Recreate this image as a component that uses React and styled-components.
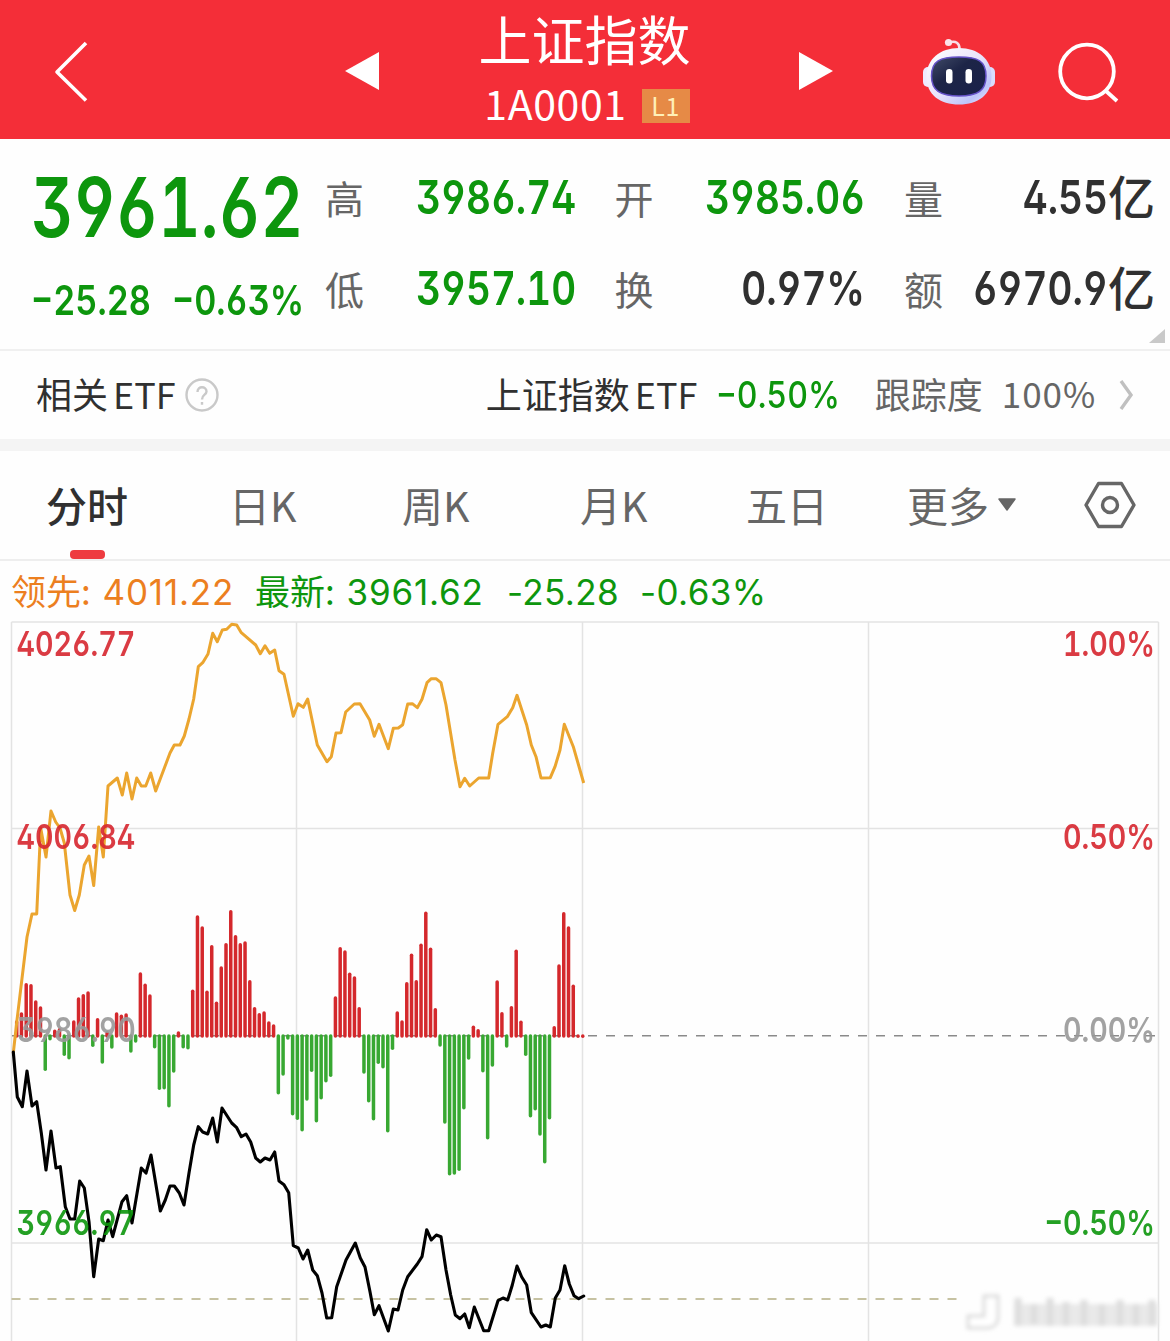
import styled, { createGlobalStyle } from "styled-components";

const GREEN = "#0d960d";
const RED = "#d7262f";
const DARK = "#303030";
const GRAY = "#666";

const quotes = [
  { label: "高", value: "3986.74", color: GREEN },
  { label: "开", value: "3985.06", color: GREEN },
  { label: "量", value: "4.55", unit: "亿", color: DARK },
  { label: "低", value: "3957.10", color: GREEN },
  { label: "换", value: "0.97%", color: DARK },
  { label: "额", value: "6970.9", unit: "亿", color: DARK },
];

const tabs = [
  { name: "分时", left: 46, active: true },
  { name: "日K", left: 229 },
  { name: "周K", left: 402 },
  { name: "月K", left: 580 },
  { name: "五日", left: 746 },
  { name: "更多", left: 907, caret: true },
];

const leadLine =
  "13.3,1053 17,1020 27,937 32,914 36.7,914 40.7,828 46,857 51,811 55.7,822 60,828 64.3,843 70,895 74.7,910.5 79.3,895 84.3,865 89,856 93.7,885.5 98.7,827 103.3,857 108,786 117.3,778 122.3,795 126.7,773 132,799 136.7,778 141.3,786 145.7,786 150.7,773 155.7,791 170,753 174.3,745 180,745 184.3,736 189,719 193.7,699 198.3,666.7 202.7,662.7 208,654 212.7,633.3 217.3,641.7 222.3,630 226.7,629.3 231.7,624.3 236.7,625 241.3,632.7 255.7,645 260.3,653.7 265,645.7 269.7,653.3 274.7,650 279,670.7 284,674.3 293.3,716.3 298,703.7 303.3,707.3 307.7,699 317.3,745 327,761.7 331.3,756.7 336,733 341,732.7 345.7,712 354.3,704 360,703.7 369.7,720 374.3,736.3 379,724.3 388.3,748.7 393.3,728.3 398.3,728 402.7,724.7 407.7,704 412.3,703.7 417.3,707.7 422,699.3 427,682.7 431.3,678.7 436,678.7 441,682.7 446,705 455,760 460,786.7 464.7,778.3 469.7,786 478.7,778 488.7,778 492.7,753.3 498,724.3 507.3,716.7 512.7,707.7 517,695.3 526.7,725 531.3,745 536,756.7 541,778 550.3,777.7 555,766.7 560,750 564.3,724.3 573.3,746.7 583.7,783";

const priceLine =
  "13.3,1052 17.3,1097 22.3,1106.7 27,1071 32,1106 36.7,1101.7 41.3,1133 46,1170 51,1131 56,1168 60.3,1166.7 65.3,1206.7 70,1219 74.7,1219 79.7,1181 84.3,1188 89,1221.7 93.7,1276.7 98.7,1239 103.3,1240.7 108,1220 112.7,1236.7 122,1201.7 126.7,1195.7 132,1223 141.3,1168 146,1173 151,1155 160.3,1211 165.3,1200 170,1186 174.3,1186 179.3,1193 184,1205 189,1173 193.7,1145 198.3,1126.7 202.7,1132 207.7,1134 212.7,1118 217.3,1142 222,1108 231.7,1123 236.7,1127.7 241.3,1136.7 246,1134 250.7,1142 255.7,1158 260.3,1162 265,1158 270,1160 274.7,1152 279,1181 284,1184.7 288.7,1192.7 293.3,1245.7 298.3,1248 303,1259 307.7,1250 312.7,1270 317.3,1275.7 322,1293 326.7,1318 331.7,1317.7 336.7,1286.7 346,1260 355.3,1243 360.3,1258 365,1267 370,1291.7 374.3,1314.7 379,1305.7 388.3,1331 393.3,1309 398,1310 402.7,1290 407.7,1276.7 417.3,1264 422,1256.7 426.7,1229.7 431.3,1240 436.3,1235 441,1236.7 446,1270 450.7,1295 455.3,1315 460,1318.7 464.7,1314 469.3,1327.7 474.3,1307 483.7,1330.7 488.7,1330.7 498,1300.7 503,1298 507.7,1300 512.3,1285 517,1266 521.7,1277 526.7,1285 531.3,1312.7 541,1327 545.7,1325 550.3,1327 555.3,1298 560,1290 564.7,1265.7 569.3,1284 574,1295.7 578.7,1298.7 583.7,1296";

// three units per pixel, positive bars go up
const bars = [
  45, 69, 157, 154, 105, 87, -103, -11, 17, 22, -58, -68, 45, 114, 124, 132,
  -31, 52, -81, 12, -36, 69, 62, 66, -48, -18, 189, 155, 123, -35, -160, -158,
  -212, -108, 12, -35, -38, 137, 360, 327, 134, 271, 101, 207, 277, 376, 301,
  277, 282, 166, 85, 67, 72, 42, 33, -173, -117, -9, -236, -250, -284, -192,
  -106, -257, -188, -137, -121, 117, 265, 255, 188, 177, 85, -111, -197, -251,
  -82, -95, -287, -40, 72, 45, 160, 245, 166, 275, 371, 263, 82, -30, -261,
  -416, -414, -403, -218, -69, 29, 19, -107, -308, -90, 165, 70, -33, 88, 257,
  44, -58, -242, -221, -297, -380, -248, 28, 213, 370, 327, 152, 2, 2,
];

const axisLabels = [
  { text: "4026.77", x: 16.5, y: 656, color: RED },
  { text: "4006.84", x: 16.5, y: 849, color: RED },
  { text: "3986.90", x: 17, y: 1042, color: "#999" },
  { text: "3966.97", x: 16.5, y: 1235, color: GREEN },
  { text: "1.00%", x: 1155, y: 656, color: RED, end: true },
  { text: "0.50%", x: 1155, y: 849, color: RED, end: true },
  { text: "0.00%", x: 1155, y: 1042, color: "#999", end: true },
  { text: "−0.50%", x: 1155, y: 1235, color: GREEN, end: true },
];

const BackIcon = () => (
  <svg width="36" height="68" viewBox="0 0 36 68">
    <path d="M33 6 4 35 33 63.500" fill="none" stroke="#fff" strokeWidth="3.600" strokeLinejoin="round" />
  </svg>
);

const RobotIcon = () => (
  <svg width="74" height="68" viewBox="0 0 74 68">
    <defs>
      <linearGradient id="shell" x1="0" y1="0" x2="1" y2="1">
        <stop offset="0" stopColor="#fff" />
        <stop offset="0.5" stopColor="#e9e4fb" />
        <stop offset="0.8" stopColor="#bdc4fa" />
        <stop offset="1" stopColor="#f3eefc" />
      </linearGradient>
      <linearGradient id="face" x1="0" y1="0" x2="1" y2="1">
        <stop offset="0" stopColor="#414b68" />
        <stop offset="0.4" stopColor="#1d2547" />
        <stop offset="1" stopColor="#19204a" />
      </linearGradient>
    </defs>
    <path d="M27 4.500C34 2.500 37.500 5 37.500 11" fill="none" stroke="#f8dce6" strokeWidth="2.600" />
    <circle cx="26.500" cy="4.500" r="3.600" fill="#fbe3ea" />
    <rect x="1" y="29" width="10" height="20" rx="5" fill="#efeaff" />
    <rect x="63" y="29" width="10" height="20" rx="5" fill="#d9dcfd" />
    <path d="M37 10C56 10 69.500 21 69.500 38.500C69.500 57 56 66.500 37 66.500S4.500 57 4.500 38.500C4.500 21 18 10 37 10Z" fill="url(#shell)" />
    <path d="M37 19C56 19 64 23 64 38C64 52.500 56 58 37 58S9.500 52.500 9.500 38C9.500 23 18 19 37 19Z" fill="url(#face)" stroke="#6552c8" strokeWidth="1.500" />
    <rect x="24" y="31" width="6.500" height="14.500" rx="3.200" fill="#fff" />
    <rect x="43.500" y="31" width="6.500" height="14.500" rx="3.200" fill="#fff" />
  </svg>
);

const SearchIcon = () => (
  <svg width="64" height="68" viewBox="0 0 64 68" fill="none" stroke="#fff" strokeWidth="3.800">
    <circle cx="31" cy="33.500" r="26.800" />
    <path d="M50 53 61 63" />
  </svg>
);

const HexIcon = () => (
  <svg width="52" height="48" viewBox="0 0 52 48" fill="none" stroke={GRAY} strokeWidth="3.400" strokeLinejoin="round">
    <path d="M14.500 2.500H37.500L50 24 37.500 45.500H14.500L2 24Z" />
    <circle cx="26" cy="24" r="7.500" />
  </svg>
);

const Chart = () => (
  <ChartSvg viewBox="0 617 1170 724">
    <defs>
      <filter id="haze" x="-20%" y="-40%" width="140%" height="180%">
        <feGaussianBlur stdDeviation="2" />
      </filter>
    </defs>
    <g stroke="#e3e3e3" strokeWidth="1.500">
      <path d="M11.500 622H1158.500M11.500 828.500H1158.500M11.500 1243H1158.500" />
      <path d="M11.500 622V1341M296.500 622V1341M582.500 622V1341M868.500 622V1341M1158.500 622V1341" />
    </g>
    <path d="M12 1035.700H1158" stroke="#8a8a8a" strokeWidth="1.600" strokeDasharray="9 9" />
    <path d="M11.500 1299H958" stroke="#c6c2a2" strokeWidth="2" strokeDasharray="9 9" />
    <g strokeWidth="3.500" strokeLinecap="round">
      {bars.map((value, i) => {
        const x = 16.7 + i * 4.757;
        const end = 1036 - value / 3 + (value > 0 ? 1 : -1);
        return (
          <line key={i} x1={x} x2={x} y1="1036" y2={end} stroke={value > 0 ? "#d4282c" : "#38a832"} />
        );
      })}
    </g>
    <polyline points={leadLine} fill="none" stroke="#eba52f" strokeWidth="3" strokeLinejoin="round" />
    <polyline points={priceLine} fill="none" stroke="#000" strokeWidth="3.100" strokeLinejoin="round" strokeLinecap="round" />
    {axisLabels.map(({ text, x, y, color, end }) => (
      <AxisText
        key={text}
        transform={`translate(${x} ${y}) scale(0.83 1)`}
        textAnchor={end ? "end" : "start"}
        fill={color}
      >
        {text}
      </AxisText>
    ))}
    <g filter="url(#haze)">
      <path d="M984 1296H998V1318Q997 1328 986 1328H968V1316H984Z" fill="#fff" stroke="#d4d4d4" strokeWidth="2.500" />
      <rect x="1014" y="1304" width="144" height="22" fill="#e9e9e9" />
      <path d="M1018 1298V1326M1034 1304V1324M1050 1298V1326M1066 1302V1326M1084 1300V1326M1102 1304V1326M1120 1300V1326M1136 1304V1326M1152 1300V1326" stroke="#dedede" strokeWidth="7" />
    </g>
  </ChartSvg>
);

export default function App() {
  return (
    <>
      <GlobalStyle />
      <Page>
        <Header>
          <BackIcon />
          <Switcher>
            <svg width="34" height="38" viewBox="0 0 34 38">
              <path d="M34 0V38L0 19Z" fill="#fff" />
            </svg>
            <Heading>
              <Title>上证指数</Title>
              <Code>
                1A0001 <Level>L1</Level>
              </Code>
            </Heading>
            <svg width="34" height="38" viewBox="0 0 34 38">
              <path d="M0 0V38L34 19Z" fill="#fff" />
            </svg>
          </Switcher>
          <HeaderActions>
            <RobotIcon />
            <SearchIcon />
          </HeaderActions>
        </Header>

        <Summary>
          <Latest>
            <Price>3961.62</Price>
            <Change>
              <ChangeValue>−25.28</ChangeValue>
              <ChangeValue>−0.63%</ChangeValue>
            </Change>
          </Latest>
          <Quotes>
            {quotes.map(({ label, value, unit, color }) => (
              <Quote key={label}>
                <QuoteLabel>{label}</QuoteLabel>
                <QuoteValue $color={color}>
                  <Digits $size={47} $weight={600} $squeeze={0.82} $origin="right">
                    {value}
                  </Digits>
                  {unit && <Unit>{unit}</Unit>}
                </QuoteValue>
              </Quote>
            ))}
          </Quotes>
          <Corner />
        </Summary>

        <EtfRow>
          <span>相关 ETF</span>
          <svg width="34" height="34" viewBox="0 0 34 34" fill="none" stroke="#c9c9c9" strokeWidth="2.400">
            <circle cx="17" cy="17" r="15.500" />
            <path d="M12.500 14C12.500 7.500 21.500 8 21.500 13.500C21.500 17 17 16.500 17 21.500M17 24V26.800" />
          </svg>
          <EtfName>上证指数 ETF</EtfName>
          <EtfChange>
            <Digits $size={37} $weight={500} $squeeze={0.87} $origin="left">
              −0.50%
            </Digits>
          </EtfChange>
          <EtfTrack>跟踪度</EtfTrack>
          <EtfPercent>100%</EtfPercent>
          <svg width="16" height="32" viewBox="0 0 16 32">
            <path d="M3 2 13 16 3 30" fill="none" stroke="#c0c0c0" strokeWidth="3.400" />
          </svg>
        </EtfRow>

        <Tabs>
          {tabs.map(({ name, left, active, caret }, i) => (
            <Tab key={name} $width={(tabs[i + 1]?.left ?? 1084) - left} $active={active}>
              <span>{name}</span>
              {caret && (
                <svg width="20" height="14" viewBox="0 0 20 14">
                  <path d="M2 1H18L10 12Z" fill={GRAY} stroke={GRAY} strokeWidth="1.500" strokeLinejoin="round" />
                </svg>
              )}
            </Tab>
          ))}
          <HexIcon />
        </Tabs>

        <Legend>
          <LegendItem $color="#ec7f1f" $width={244} $spacing={0.8}>
            领先: <b>4011.22</b>
          </LegendItem>
          <LegendItem $color={GREEN} $width={252} $spacing={0.8}>
            最新: <b>3961.62</b>
          </LegendItem>
          <LegendItem $color={GREEN} $width={133} $spacing={0.4}>
            <b>-25.28</b>
          </LegendItem>
          <LegendItem $color={GREEN} $width={130} $spacing={0.4}>
            <b>-0.63%</b>
          </LegendItem>
        </Legend>
        <Chart />
      </Page>
    </>
  );
}

const GlobalStyle = createGlobalStyle`
  * {
    box-sizing: border-box;
  }

  body {
    margin: 0;
    background: #fff;
    font-family: "Noto Sans CJK SC", sans-serif;
  }

  svg {
    display: block;
    flex-shrink: 0;
  }
`;

const Page = styled.main`
  width: 1170px;
  height: 1341px;
  overflow: hidden;
  background: #fefefe;
`;

const Header = styled.header`
  display: flex;
  align-items: center;
  height: 139px;
  padding: 3px 50px 0 53px;
  background: #f42e38;
  color: #fff;
`;

const Switcher = styled.div`
  display: flex;
  align-items: center;
  justify-content: space-between;
  width: 488px;
  margin-left: 255.5px;
`;

const Heading = styled.div`
  display: flex;
  flex-direction: column;
  align-items: center;
  margin-top: -2px;
`;

const Title = styled.h1`
  margin: 0 0 0 -8px;
  font-size: 53px;
  font-weight: 400;
  line-height: 65px;
`;

const Code = styled.div`
  display: flex;
  align-items: center;
  gap: 15px;
  margin-left: -3px;
  font-size: 41px;
  line-height: 63px;
  letter-spacing: 0.6px;
`;

const Level = styled.span`
  width: 48px;
  height: 34px;
  margin-top: 6px;
  background: #e68a46;
  color: #fff0b8;
  font-size: 25px;
  line-height: 32px;
  text-align: center;
`;

const HeaderActions = styled.div`
  display: flex;
  gap: 60px;
  margin-left: 89px;

  svg {
    margin-top: 1px;
  }
`;

const Digits = styled.span`
  display: inline-block;
  font-family: Inter, sans-serif;
  font-size: ${({ $size }) => $size}px;
  font-weight: ${({ $weight }) => $weight};
  font-feature-settings: "tnum", "ss01", "cv03", "cv04";
  white-space: nowrap;
  transform: scaleX(${({ $squeeze }) => $squeeze});
  transform-origin: ${({ $origin }) => $origin} center;
`;

const Summary = styled.section`
  position: relative;
  display: flex;
  height: 212px;
  border-bottom: 2px solid #f0f0f0;
`;

const Latest = styled.div`
  width: 325px;
  padding: 20px 0 0 31px;
  color: ${GREEN};
`;

const Price = styled(Digits).attrs({ $size: 83, $weight: 600, $squeeze: 0.79, $origin: "left" })`
  display: block;
  line-height: 96px;
`;

const Change = styled.div`
  display: flex;
  margin-top: 15px;
  line-height: 60px;
`;

const ChangeValue = styled(Digits).attrs({ $size: 41.5, $weight: 600, $squeeze: 0.825, $origin: "left" })`
  width: 141px;
`;

const Quotes = styled.div`
  display: grid;
  grid-template-columns: repeat(3, 251px);
  grid-auto-rows: 91px;
  column-gap: 38.5px;
  padding-top: 13px;
`;

const Quote = styled.div`
  display: flex;
  align-items: center;
  justify-content: space-between;
  line-height: 91px;
`;

const QuoteLabel = styled.span`
  color: ${GRAY};
  font-size: 39px;
`;

const QuoteValue = styled.span`
  display: flex;
  align-items: center;
  margin-top: -2px;
  color: ${({ $color }) => $color};
`;

const Unit = styled.span`
  margin-top: -4px;
  font-size: 47px;
  font-weight: 500;
`;

const Corner = styled.i`
  position: absolute;
  right: 5px;
  bottom: 6px;
  border-bottom: 14px solid #c9c9c9;
  border-left: 16px solid transparent;
`;

const EtfRow = styled.section`
  display: flex;
  align-items: center;
  height: 100px;
  padding-left: 36px;
  border-bottom: 12px solid #f4f4f4;
  color: ${DARK};
  font-size: 36px;
  line-height: 88px;
  word-spacing: -3px;
  white-space: nowrap;

  > span {
    margin-top: -4px;
  }

  > svg:first-of-type {
    margin-left: 9px;
  }
`;

const EtfName = styled.span`
  width: 230px;
  margin-left: 267px;
`;

const EtfChange = styled.span`
  width: 159px;
  color: ${GREEN};
`;

const EtfTrack = styled.span`
  width: 127px;
  color: ${GRAY};
`;

const EtfPercent = styled.span`
  width: 116px;
  color: ${GRAY};
  font-size: 35px;
  letter-spacing: 1px;
`;

const Tabs = styled.nav`
  display: flex;
  align-items: center;
  height: 110px;
  padding-left: 46px;
  border-bottom: 2px solid #eee;
`;

const Tab = styled.div`
  position: relative;
  display: flex;
  align-items: center;
  gap: 8px;
  width: ${({ $width }) => $width}px;
  color: ${({ $active }) => ($active ? DARK : GRAY)};
  font-size: 41px;
  font-weight: ${({ $active }) => ($active ? 500 : 400)};
  line-height: 108px;

  > span {
    margin-top: -3px;
  }

  &::after {
    content: "";
    display: ${({ $active }) => ($active ? "block" : "none")};
    position: absolute;
    left: 24px;
    bottom: -1px;
    width: 35px;
    height: 9px;
    border-radius: 4px;
    background: #ee3b40;
  }
`;

const Legend = styled.div`
  display: flex;
  height: 56px;
  padding-left: 11px;
  font-size: 35px;
  line-height: 58px;
`;

const LegendItem = styled.span`
  width: ${({ $width }) => $width}px;
  color: ${({ $color }) => $color};
  white-space: nowrap;
  word-spacing: 4px;

  b {
    font-family: Inter, sans-serif;
    font-weight: 400;
    letter-spacing: ${({ $spacing }) => $spacing}px;
  }
`;

const ChartSvg = styled.svg`
  width: 1170px;
  height: 724px;
`;

const AxisText = styled.text`
  font-family: Inter, sans-serif;
  font-size: 34.5px;
  font-weight: 600;
  font-feature-settings: "tnum", "ss01", "cv03", "cv04";
  opacity: 0.9;
`;
